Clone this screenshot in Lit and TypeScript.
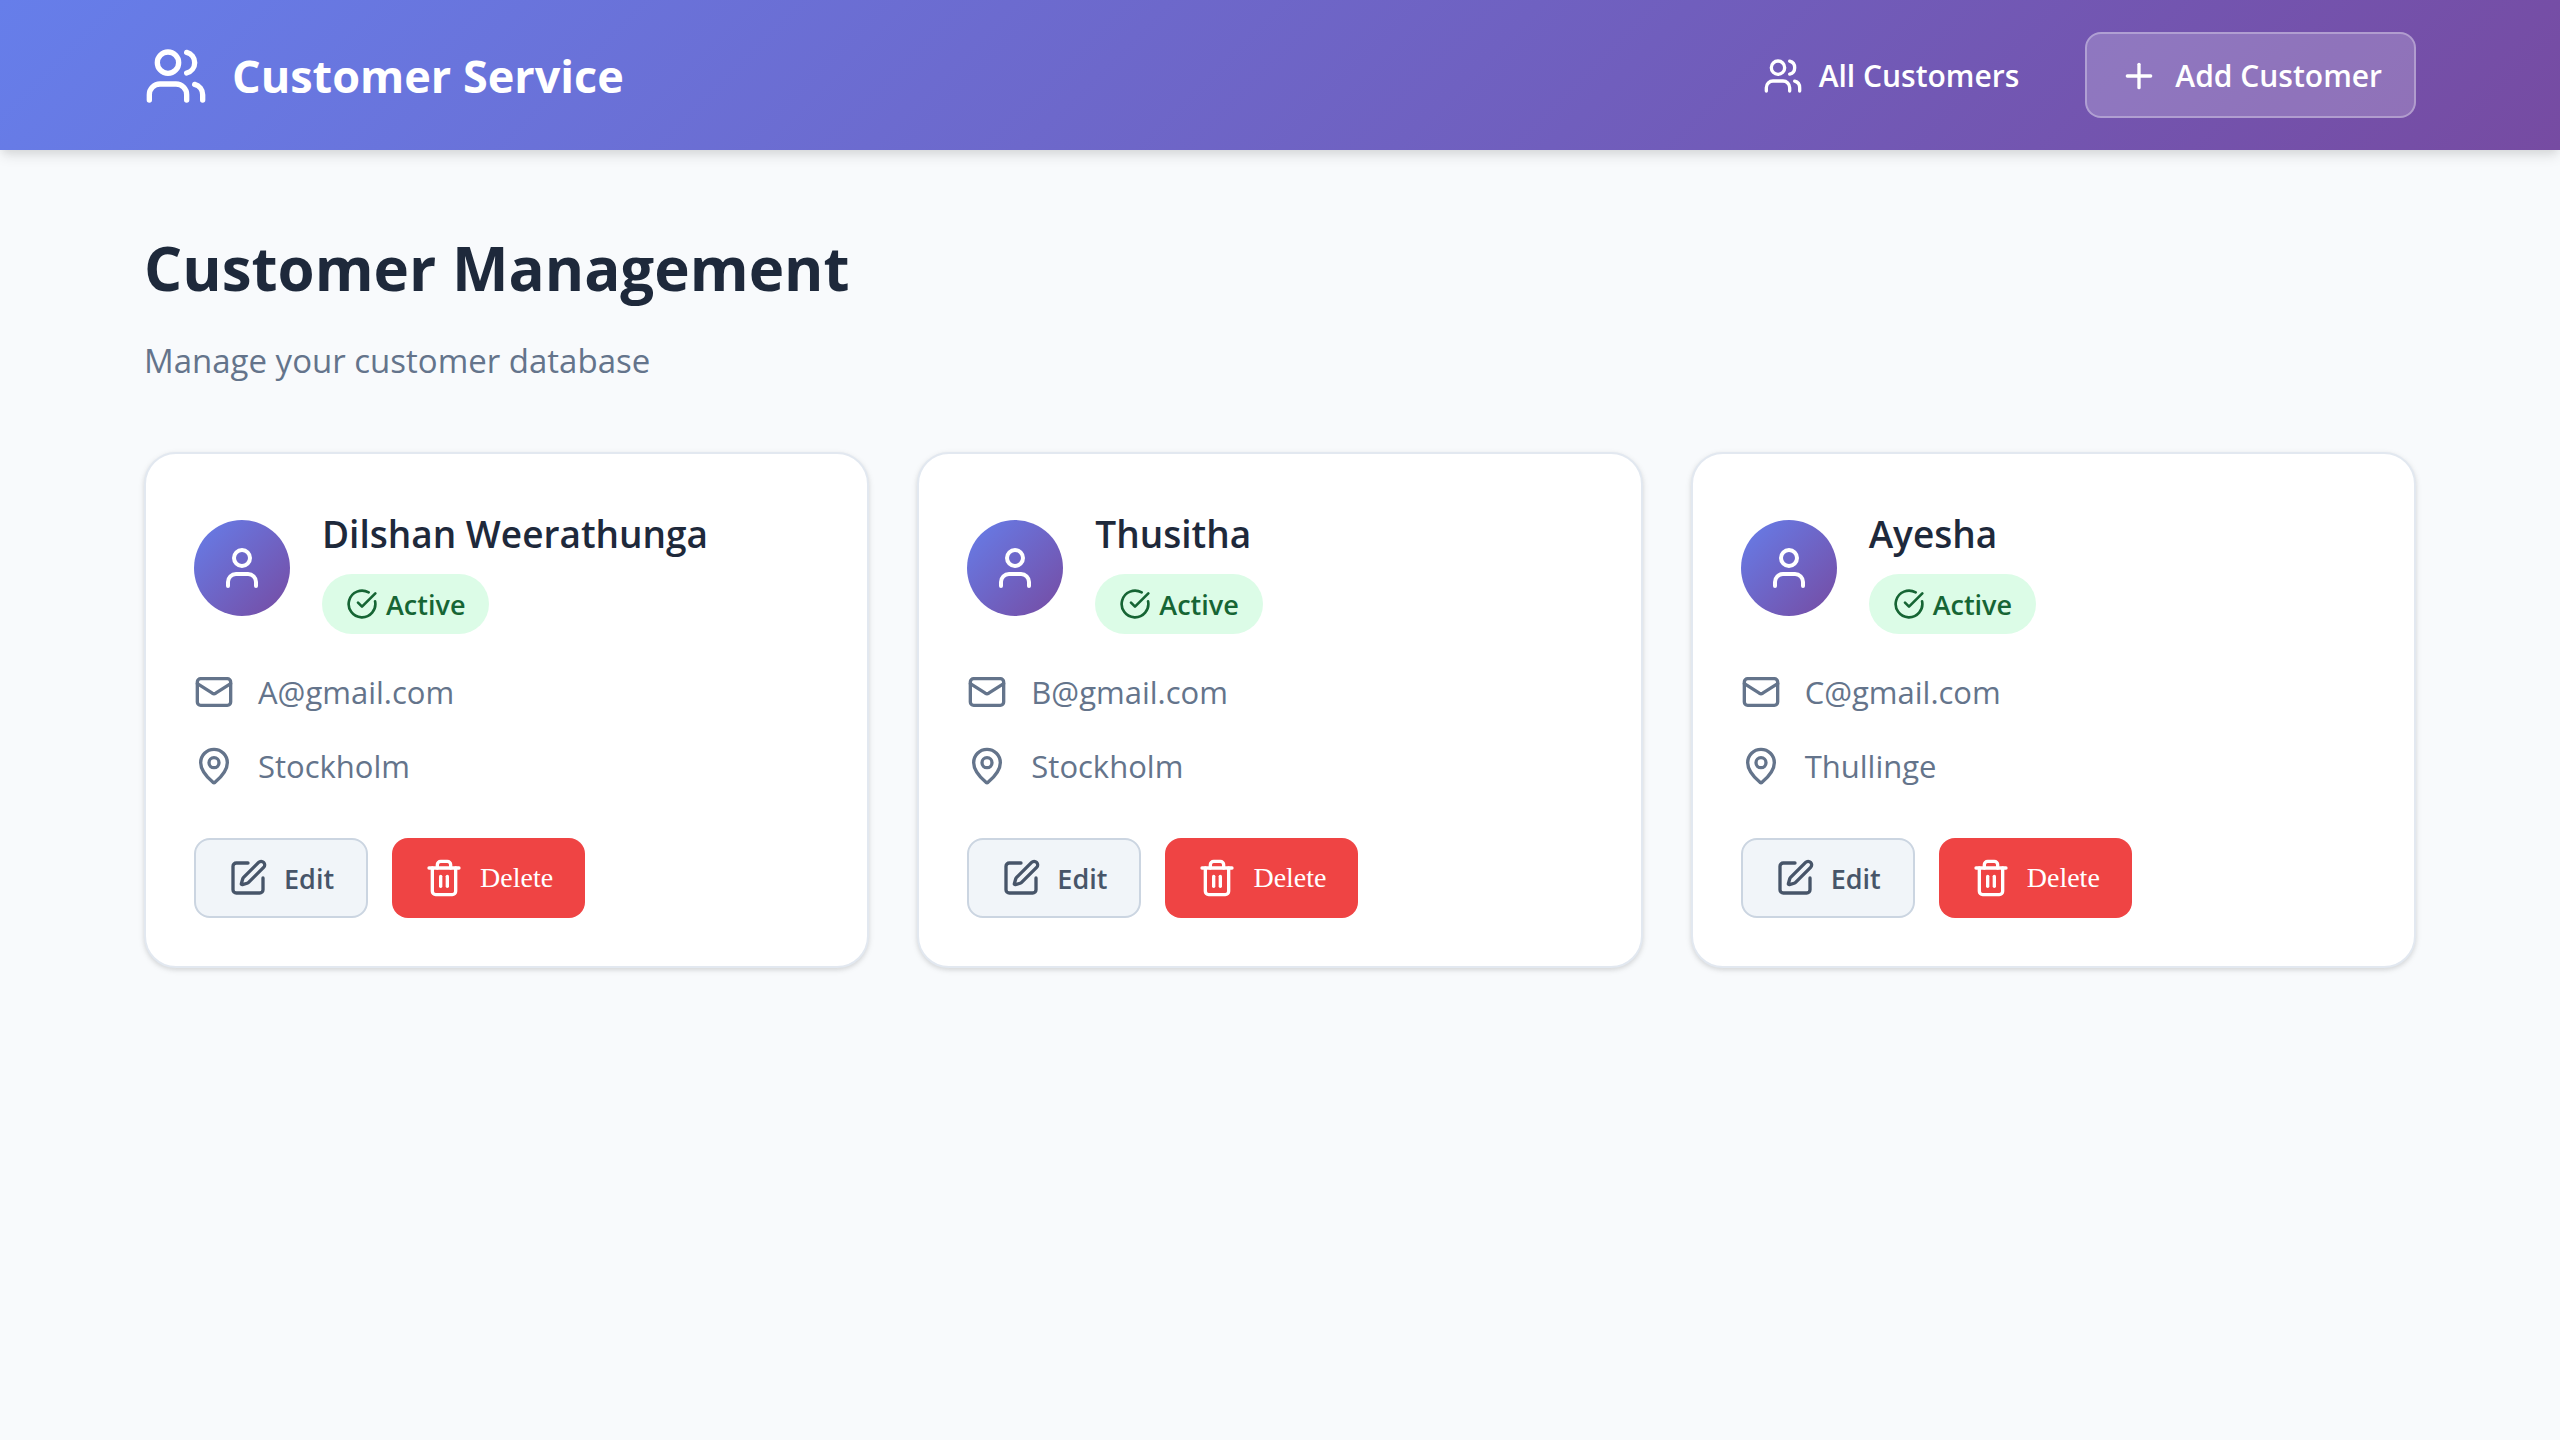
import { LitElement, html, svg, css } from "lit";
import { customElement, property, state } from "lit/decorators.js";

interface Customer {
  id: number;
  name: string;
  status: string;
  email: string;
  city: string;
}

const shapes = {
  users: svg`<path d="M16 21v-2a4 4 0 0 0-4-4H6a4 4 0 0 0-4 4v2"/><circle cx="9" cy="7" r="4"/><path d="M22 21v-2a4 4 0 0 0-3-3.87"/><path d="M16 3.13a4 4 0 0 1 0 7.75"/>`,
  user: svg`<path d="M19 21v-2a4 4 0 0 0-4-4H9a4 4 0 0 0-4 4v2"/><circle cx="12" cy="7" r="4"/>`,
  plus: svg`<path d="M5 12h14"/><path d="M12 5v14"/>`,
  check: svg`<path d="M21.801 10A10 10 0 1 1 17 3.335"/><path d="m9 11 3 3L22 4"/>`,
  mail: svg`<rect width="20" height="16" x="2" y="4" rx="2"/><path d="m22 7-8.991 5.727a2 2 0 0 1-2.009 0L2 7"/>`,
  pin: svg`<path d="M20 10c0 4.993-5.539 10.193-7.399 11.799a1 1 0 0 1-1.202 0C9.539 20.193 4 14.993 4 10a8 8 0 0 1 16 0"/><circle cx="12" cy="10" r="3"/>`,
  edit: svg`<path d="M12 3H5a2 2 0 0 0-2 2v14a2 2 0 0 0 2 2h14a2 2 0 0 0 2-2v-7"/><path d="M18.375 2.625a1 1 0 0 1 3 3l-9.013 9.014a2 2 0 0 1-.853.505l-2.873.84a.5.5 0 0 1-.62-.62l.84-2.873a2 2 0 0 1 .506-.852z"/>`,
  trash: svg`<path d="M3 6h18"/><path d="M19 6v14a2 2 0 0 1-2 2H7a2 2 0 0 1-2-2V6"/><path d="M8 6V4a2 2 0 0 1 2-2h4a2 2 0 0 1 2 2v2"/><path d="M10 11v6"/><path d="M14 11v6"/>`,
};

const icon = (name: keyof typeof shapes, size: string) => html`
  <svg class="icon ${size}" viewBox="0 0 24 24" aria-hidden="true">${shapes[name]}</svg>
`;

const iconStyles = css`
  .icon {
    display: block;
    flex: none;
    fill: none;
    stroke: currentColor;
    stroke-width: 2;
    stroke-linecap: round;
    stroke-linejoin: round;
  }
  .small { width: 32px; height: 32px; }
  .medium { width: 40px; height: 40px; }
  .large { width: 48px; height: 48px; }
  .huge { width: 64px; height: 64px; }
`;

@customElement("customer-card")
class CustomerCard extends LitElement {
  @property({ attribute: false }) customer!: Customer;

  static styles = [
    iconStyles,
    css`
      :host {
        display: block;
        box-sizing: border-box;
        padding: 48px;
        background: #fff;
        border: 2px solid #e2e8f0;
        border-radius: 32px;
        box-shadow: 0 2px 6px rgba(0, 0, 0, 0.1), 0 2px 4px rgba(0, 0, 0, 0.06);
      }
      .head {
        display: flex;
        align-items: center;
        gap: 32px;
        margin-bottom: 32px;
      }
      .avatar {
        display: flex;
        align-items: center;
        justify-content: center;
        flex: none;
        width: 96px;
        height: 96px;
        border-radius: 50%;
        color: #fff;
        background: linear-gradient(135deg, #667eea 0%, #764ba2 100%);
      }
      .who { display: flex; flex-direction: column; align-items: flex-start; gap: 8px; }
      .name {
        margin: 0;
        font-size: 37px;
        line-height: 64px;
        font-weight: 600;
        color: #1e293b;
      }
      .badge {
        display: inline-flex;
        align-items: center;
        gap: 8px;
        height: 60px;
        padding: 0 24px;
        border-radius: 40px;
        background: #dcfce7;
        color: #166534;
        font-size: 27px;
        font-weight: 600;
      }
      .details {
        display: grid;
        gap: 22px;
        margin: 0 0 46px;
        padding: 0;
        list-style: none;
      }
      .detail {
        display: flex;
        align-items: center;
        gap: 24px;
        font-size: 31px;
        line-height: 52px;
        color: #64748b;
      }
      .actions { display: flex; gap: 24px; }
      .button {
        display: flex;
        align-items: center;
        gap: 16px;
        box-sizing: border-box;
        height: 80px;
        padding: 0 32px;
        border-radius: 16px;
        font-size: 27px;
        font-weight: 600;
        cursor: pointer;
      }
      .edit {
        border: 2px solid #cbd5e1;
        background: #f1f5f9;
        color: #475569;
        text-decoration: none;
      }
      .delete {
        border: 0;
        background: #ef4444;
        color: #fff;
        font: 28px/32px "Liberation Serif", "Times New Roman", serif;
      }
    `,
  ];

  private remove() {
    this.dispatchEvent(new CustomEvent("remove", { detail: this.customer.id }));
  }

  render() {
    const c = this.customer;
    return html`
      <div class="head">
        <div class="avatar">${icon("user", "large")}</div>
        <div class="who">
          <h3 class="name">${c.name}</h3>
          <span class="badge">${icon("check", "small")}${c.status}</span>
        </div>
      </div>
      <ul class="details">
        <li class="detail">${icon("mail", "medium")}<span>${c.email}</span></li>
        <li class="detail">${icon("pin", "medium")}<span>${c.city}</span></li>
      </ul>
      <div class="actions">
        <a class="button edit" href="#edit-${c.id}">${icon("edit", "medium")}Edit</a>
        <button class="button delete" type="button" @click=${this.remove}>${icon("trash", "medium")}Delete</button>
      </div>
    `;
  }
}

@customElement("app-root")
class AppRoot extends LitElement {
  @state() private customers: Customer[] = [
    { id: 1, name: "Dilshan Weerathunga", status: "Active", email: "A@gmail.com", city: "Stockholm" },
    { id: 2, name: "Thusitha", status: "Active", email: "B@gmail.com", city: "Stockholm" },
    { id: 3, name: "Ayesha", status: "Active", email: "C@gmail.com", city: "Thullinge" },
  ];

  static styles = [
    iconStyles,
    css`
      :host {
        display: block;
        min-height: 100vh;
        background: #f8fafc;
        color: #1e293b;
        font-family: "Segoe UI", "Open Sans", "Noto Sans", sans-serif;
      }
      .header {
        background: linear-gradient(135deg, #667eea 0%, #764ba2 100%);
        box-shadow: 0 8px 12px -2px rgba(0, 0, 0, 0.1), 0 4px 8px -2px rgba(0, 0, 0, 0.06);
        color: #fff;
      }
      .container {
        box-sizing: border-box;
        max-width: 2400px;
        margin: 0 auto;
        padding: 0 64px;
      }
      .bar {
        display: flex;
        align-items: center;
        justify-content: space-between;
        padding-top: 32px;
        padding-bottom: 32px;
      }
      .brand {
        display: flex;
        align-items: center;
        gap: 24px;
        padding-top: 2px;
        font-size: 45px;
        line-height: 64px;
        font-weight: 700;
        color: inherit;
        text-decoration: none;
      }
      .nav { display: flex; gap: 32px; }
      .link {
        display: flex;
        align-items: center;
        gap: 16px;
        padding: 21px 32px 19px;
        border: 2px solid transparent;
        border-radius: 16px;
        font-size: 30px;
        line-height: 42px;
        font-weight: 600;
        color: inherit;
        text-decoration: none;
      }
      .add {
        background: rgba(255, 255, 255, 0.2);
        border-color: rgba(255, 255, 255, 0.3);
      }
      .main { padding-top: 74px; padding-bottom: 64px; }
      .title { margin: 0 0 20px; font-size: 60px; line-height: 88px; font-weight: 700; }
      .subtitle { margin: 0 0 62px; font-size: 33px; line-height: 58px; color: #64748b; }
      .grid {
        display: grid;
        grid-template-columns: repeat(auto-fill, minmax(640px, 1fr));
        gap: 48px;
      }
    `,
  ];

  private remove(e: CustomEvent<number>) {
    this.customers = this.customers.filter((c) => c.id !== e.detail);
  }

  render() {
    return html`
      <header class="header">
        <div class="container bar">
          <a class="brand" href="#home">${icon("users", "huge")}<span>Customer Service</span></a>
          <nav class="nav">
            <a class="link" href="#customers">${icon("users", "medium")}All Customers</a>
            <a class="link add" href="#add">${icon("plus", "medium")}Add Customer</a>
          </nav>
        </div>
      </header>
      <main class="container main">
        <h1 class="title">Customer Management</h1>
        <p class="subtitle">Manage your customer database</p>
        <div class="grid">
          ${this.customers.map(
            (c) => html`<customer-card .customer=${c} @remove=${this.remove}></customer-card>`
          )}
        </div>
      </main>
    `;
  }
}
